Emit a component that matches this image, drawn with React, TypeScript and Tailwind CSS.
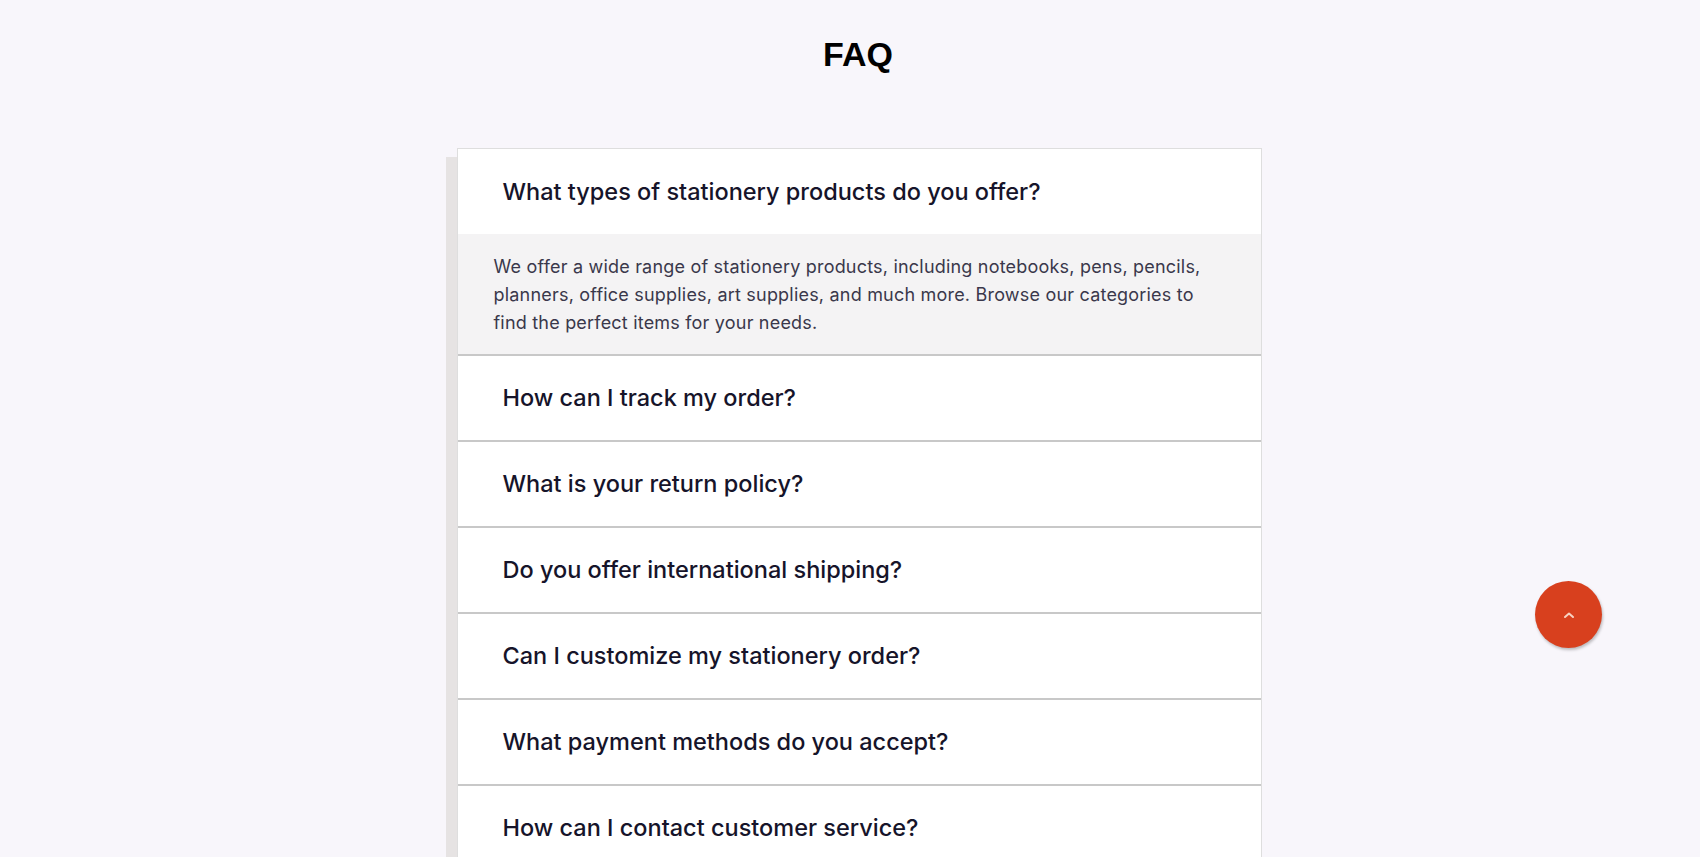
import React from "react";

const items = [
  "What types of stationery products do you offer?",
  "How can I track my order?",
  "What is your return policy?",
  "Do you offer international shipping?",
  "Can I customize my stationery order?",
  "What payment methods do you accept?",
  "How can I contact customer service?",
  "Do you offer discounts for bulk orders?",
];

export default function App() {
  return (
    <div className="h-screen overflow-hidden bg-[#f8f6fb] pl-[16px]" style={{ fontFamily: "Inter, 'Noto Sans', sans-serif" }}>
      <div className="flex h-[108px] items-center justify-center">
        <h1 className="text-[34px] font-bold text-black" style={{ fontFamily: "'Liberation Sans', Arial, sans-serif" }}>
          FAQ
        </h1>
      </div>
      <div className="mt-[40px] flex justify-center pl-[2px]">
        <div className="w-[805px] border border-[#dedede] bg-white shadow-[-11px_9px_0_#e6e3e3]">
          {items.map((q, i) => (
            <div key={q} className={i > 0 ? "border-t-2 border-[#c8c8c8]" : ""}>
              <div className={`flex items-center pl-[45px] ${i === 0 ? "h-[85px]" : "h-[84px]"}`}>
                <span className="text-[23.5px] font-medium text-[#16142a]">{q}</span>
              </div>
              {i === 0 && (
                <div className="bg-[#f4f3f4] pb-[17px] pl-[36px] pr-[20px] pt-[19px]">
                  <p className="text-[18px] leading-[28px] tracking-[0.2px] text-[#3a384b]">
                    We offer a wide range of stationery products, including notebooks, pens, pencils,
                    <br />
                    planners, office supplies, art supplies, and much more. Browse our categories to
                    <br />
                    find the perfect items for your needs.
                  </p>
                </div>
              )}
            </div>
          ))}
        </div>
      </div>
      <button className="fixed bottom-[209px] right-[98px] flex h-[67px] w-[67px] items-center justify-center rounded-full bg-[#d8401e] shadow-[1px_2px_3px_rgba(0,0,0,0.25)]">
        <svg width="12" height="8" viewBox="0 0 12 8" fill="none">
          <path d="M2 6 L6 2.5 L10 6" stroke="#f7d2c2" strokeWidth="2" strokeLinecap="round" strokeLinejoin="round" />
        </svg>
      </button>
    </div>
  );
}
